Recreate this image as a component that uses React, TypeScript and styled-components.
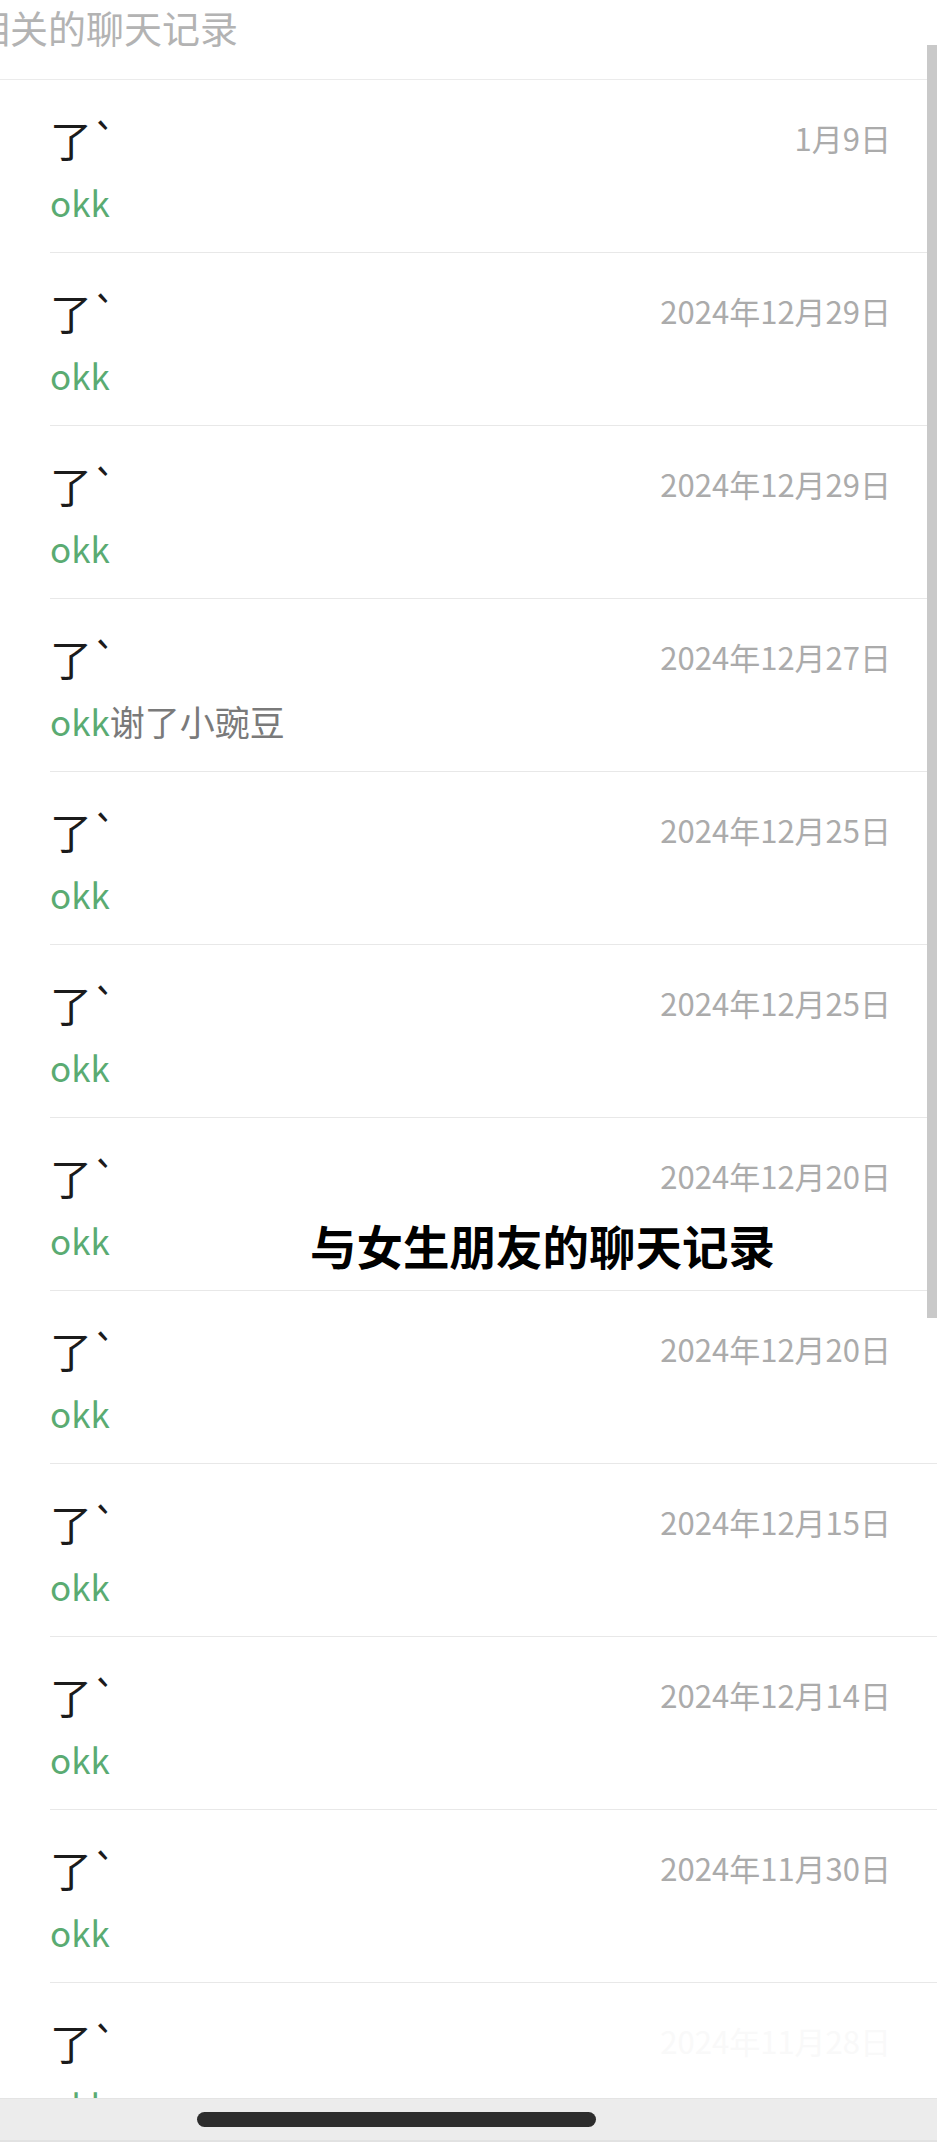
import React from 'react';
import styled, { createGlobalStyle } from 'styled-components';

interface Record {
  date: string;
  extra?: string;
  faint?: boolean;
}

const records: Record[] = [
  { date: '1月9日' },
  { date: '2024年12月29日' },
  { date: '2024年12月29日' },
  { date: '2024年12月27日', extra: '谢了小豌豆' },
  { date: '2024年12月25日' },
  { date: '2024年12月25日' },
  { date: '2024年12月20日' },
  { date: '2024年12月20日' },
  { date: '2024年12月15日' },
  { date: '2024年12月14日' },
  { date: '2024年11月30日' },
  { date: '2024年11月28日', faint: true },
];

const GlobalStyle = createGlobalStyle`
  html, body {
    margin: 0;
    padding: 0;
    background: #fff;
  }
  body {
    font-family: "Noto Sans CJK SC", "Noto Sans", sans-serif;
  }
`;

const Screen = styled.div`
  position: relative;
  width: 937px;
  height: 2142px;
  overflow: hidden;
  background: #fff;
`;

const Header = styled.div`
  height: 80px;
  padding-top: 8px;
  box-sizing: border-box;
  border-bottom: 1px solid #ebebeb;
  overflow: hidden;
`;

const HeaderTitle = styled.div`
  margin-left: -28px;
  font-size: 38px;
  line-height: 1;
  color: #b3b3b3;
  white-space: nowrap;
`;

const List = styled.div`
  margin-left: 50px;
`;

const Row = styled.div`
  height: 173px;
  box-sizing: border-box;
  padding: 38px 46px 0 0;
  border-bottom: 1px solid #e8e8e8;
`;

const TopLine = styled.div`
  display: flex;
  justify-content: space-between;
  align-items: flex-start;
`;

const Name = styled.span`
  font-size: 42px;
  line-height: 1;
  color: #1b1b1b;
`;

const DateText = styled.span<{ $faint?: boolean }>`
  margin-top: 4px;
  font-size: 31px;
  line-height: 1;
  color: ${p => (p.$faint ? '#f9f9f9' : '#ababab')};
`;

const Message = styled.div`
  margin-top: 24px;
  font-size: 35px;
  line-height: 1;
  color: #7a7a7a;
  white-space: nowrap;
`;

const Hit = styled.span`
  color: #5aab72;
`;

const Caption = styled.div`
  position: absolute;
  left: 310px;
  top: 1222px;
  font-size: 46.5px;
  line-height: 1;
  font-weight: 700;
  color: #000;
  white-space: nowrap;
`;

const ScrollThumb = styled.div`
  position: absolute;
  right: 0;
  top: 45px;
  width: 10px;
  height: 1273px;
  background: #c9c9c9;
`;

const NavBar = styled.div`
  position: absolute;
  left: 0;
  right: 0;
  bottom: 0;
  height: 44px;
  background: #ececec;
  border-top: 1px solid #e4e4e4;
  border-bottom: 2px solid #e2e2e2;
  box-sizing: border-box;
  display: flex;
  align-items: center;
  padding-left: 197px;
`;

const HomeIndicator = styled.div`
  width: 399px;
  height: 15px;
  border-radius: 8px;
  background: #2d2d2d;
`;

const App: React.FC = () => (
  <Screen>
    <GlobalStyle />
    <Header>
      <HeaderTitle>相关的聊天记录</HeaderTitle>
    </Header>
    <List>
      {records.map((r, i) => (
        <Row key={i}>
          <TopLine>
            <Name>了`</Name>
            <DateText $faint={r.faint}>{r.date}</DateText>
          </TopLine>
          <Message>
            <Hit>okk</Hit>
            {r.extra}
          </Message>
        </Row>
      ))}
    </List>
    <Caption>与女生朋友的聊天记录</Caption>
    <ScrollThumb />
    <NavBar>
      <HomeIndicator />
    </NavBar>
  </Screen>
);

export default App;
